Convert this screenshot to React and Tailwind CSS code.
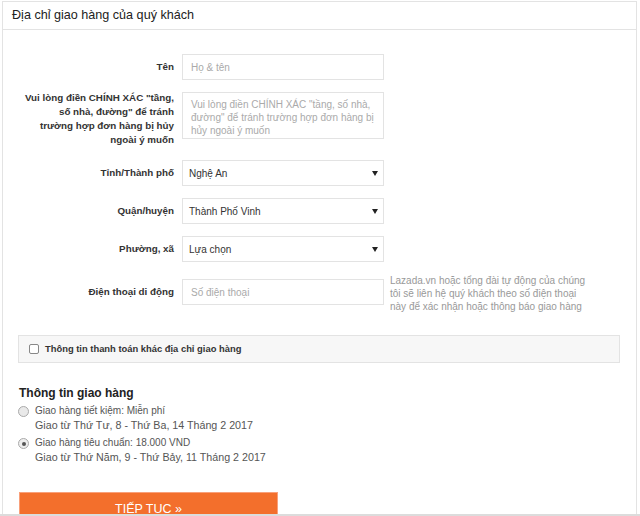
import React from 'react';

const font = { fontFamily: '"Liberation Sans", Arial, sans-serif' };

const Row = ({ label, children, className = '' }) => (
  <div className={`flex items-center ${className}`}>
    <div className="w-[171px] text-right text-[9.8px] font-bold leading-[14px] text-[#333]">{label}</div>
    <div className="ml-[8px]">{children}</div>
  </div>
);

const Select = ({ value }) => (
  <div className="relative flex h-[26px] w-[202px] items-center border border-[#e3e3e3] bg-white pl-[6px] text-[10px] text-[#333]">
    {value}
    <span className="absolute right-[5px] top-[10px] h-0 w-0 border-x-[3px] border-t-[5px] border-x-transparent border-t-[#222]" />
  </div>
);

export default function App() {
  return (
    <div style={font} className="relative h-[516px] w-[640px] overflow-hidden bg-white">
      <div className="ml-[2px] mt-[1px] h-[520px] w-[635px] border border-[#e3e3e3]">
        <div className="flex h-[28px] items-center border-b border-[#e3e3e3] pl-[9px] text-[12.6px] text-[#222]">
          Địa chỉ giao hàng của quý khách
        </div>

        <div className="mt-[24px] flex flex-col">
          <Row label="Tên">
            <div className="flex h-[26px] w-[202px] items-center border border-[#e3e3e3] pl-[8px] text-[10px] text-[#aaa]">Họ &amp; tên</div>
          </Row>
          <Row label={<>Vui lòng điền CHÍNH XÁC "tầng,<br />số nhà, đường" để tránh<br />trường hợp đơn hàng bị hủy<br />ngoài ý muốn</>} className="mt-[11px]">
            <div className="-mt-[7px] h-[47px] w-[202px] border border-[#e3e3e3] px-[8px] pt-[5px] text-[10px] leading-[13px] text-[#aaa]">
              Vui lòng điền CHÍNH XÁC "tầng, số nhà, đường" để tránh trường hợp đơn hàng bị hủy ngoài ý muốn
            </div>
          </Row>
          <Row label="Tỉnh/Thành phố" className="mt-[13px]">
            <Select value="Nghệ An" />
          </Row>
          <Row label="Quận/huyện" className="mt-[12px]">
            <Select value="Thành Phố Vinh" />
          </Row>
          <Row label="Phường, xã" className="mt-[12px]">
            <Select value="Lựa chọn" />
          </Row>
          <div className="mt-[17px] flex items-start">
            <div className="flex h-[26px] w-[171px] items-center justify-end text-[9.8px] font-bold text-[#333]">Điện thoại di động</div>
            <div className="ml-[8px] flex h-[26px] w-[202px] items-center border border-[#e3e3e3] pl-[8px] text-[10px] text-[#aaa]">Số điện thoại</div>
            <div className="-mt-[5px] ml-[6px] w-[205px] text-[10px] leading-[13px] text-[#999]">
              Lazada.vn hoặc tổng đài tự động của chúng tôi sẽ liên hệ quý khách theo số điện thoại này để xác nhận hoặc thông báo giao hàng
            </div>
          </div>
        </div>

        <div className="ml-[15px] mt-[22px] flex h-[28px] w-[602px] items-center border border-[#e3e3e3] bg-[#f7f7f7] pl-[10px]">
          <span className="h-[10px] w-[10px] rounded-[2px] border border-[#888] bg-white" />
          <span className="ml-[6px] text-[9.4px] font-bold text-[#333]">Thông tin thanh toán khác địa chỉ giao hàng</span>
        </div>

        <div className="ml-[16px] mt-[21px] text-[12px] font-bold text-[#222]">Thông tin giao hàng</div>

        <div className="ml-[15px] mt-[2px] flex items-start">
          <span className="mt-[2px] h-[11px] w-[11px] rounded-full border border-[#aaa] bg-[#e9e9e9]" />
          <div className="ml-[6px] text-[#555]">
            <div className="text-[10px] leading-[14px]">Giao hàng tiết kiệm: Miễn phí</div>
            <div className="text-[10.7px] leading-[15px]">Giao từ Thứ Tư, 8 - Thứ Ba, 14 Tháng 2 2017</div>
          </div>
        </div>
        <div className="ml-[15px] mt-[3px] flex items-start">
          <span className="mt-[2px] flex h-[11px] w-[11px] items-center justify-center rounded-full border border-[#aaa] bg-[#eee]">
            <span className="h-[4px] w-[4px] rounded-full bg-[#555]" />
          </span>
          <div className="ml-[6px] text-[#555]">
            <div className="text-[10px] leading-[14px]">Giao hàng tiêu chuẩn: 18.000 VND</div>
            <div className="text-[10.7px] leading-[15px]">Giao từ Thứ Năm, 9 - Thứ Bảy, 11 Tháng 2 2017</div>
          </div>
        </div>

        <div className="ml-[16px] mt-[27px] flex h-[34px] w-[259px] items-center justify-center border border-[#f9a07a] bg-[#f36f2c] text-[12.5px] text-white">
          TIẾP TỤC »
        </div>
      </div>
      <div className="absolute bottom-0 left-0 h-[2px] w-full bg-[#dcdcdc]" />
    </div>
  );
}
